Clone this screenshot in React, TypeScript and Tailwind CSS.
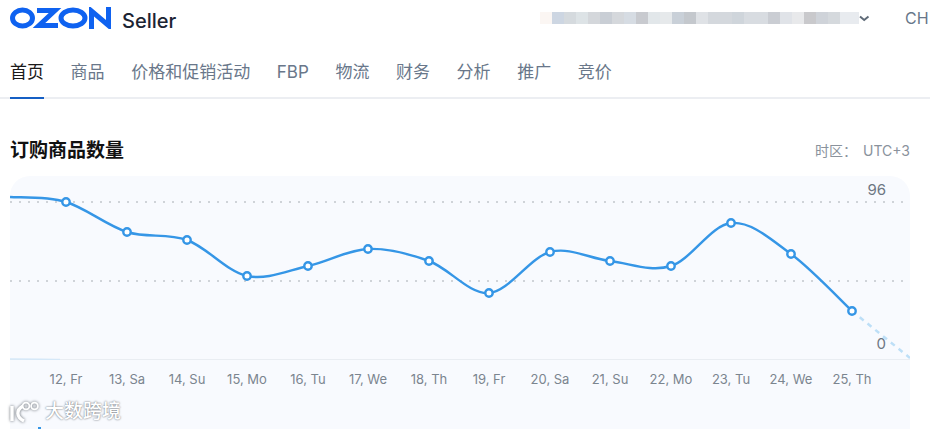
import type { ReactNode } from 'react'

const NAV = ['商品', '价格和促销活动', 'FBP', '物流', '财务', '分析', '推广', '竞价']

// Zone floutée du compte vendeur, bloc par bloc
const PIXELS = [
  'w-3 bg-[#fbf6f3]', 'w-3 bg-[#cdd6e2]', 'w-3 bg-[#d5dade]', 'w-3 bg-[#dde3e6]', 'w-3 bg-[#d4d7db]',
  'w-3 bg-[#c9ced5]', 'w-3 bg-[#d5d8dc]', 'w-3 bg-[#d6dce3]', 'w-3 bg-[#c8cacf]', 'w-3 bg-[#e2e7ea]',
  'w-3 bg-[#e6e9eb]', 'w-3 bg-[#c9d0d8]', 'w-3 bg-[#c4c8cd]', 'w-3 bg-[#dfe2e6]', 'w-3 bg-[#d4d8dd]',
  'w-3 bg-[#d4d8dd]', 'w-3 bg-[#cfd5db]', 'w-3 bg-[#d8dce1]', 'w-3 bg-[#d8dce1]', 'w-3 bg-[#cacdd3]',
  'w-3 bg-[#e0e3e8]', 'w-3 bg-[#e8e9eb]', 'w-3 bg-[#c9c9cc]', 'w-3 bg-[#cfd3d9]', 'w-3 bg-[#d5d9dd]',
  'w-[19px] bg-[#e8ebef]',
]

const POINTS: [number, number][] = [
  [56, 26], [117, 56], [177, 64], [237, 100], [298, 90], [358, 73], [419, 85],
  [479, 117], [540, 76], [600, 85], [661, 90], [721, 47], [781, 78], [842, 135],
]

const DAYS = [
  '12, Fr', '13, Sa', '14, Su', '15, Mo', '16, Tu', '17, We', '18, Th',
  '19, Fr', '20, Sa', '21, Su', '22, Mo', '23, Tu', '24, We', '25, Th',
]

// Courbe lissée : tangentes atténuées entre les points
function smoothPath(pts: [number, number][]) {
  const all: [number, number][] = [[0, 21], ...pts]
  let d = `M${all[0][0]} ${all[0][1]}`
  for (let i = 0; i < all.length - 1; i++) {
    const p0 = all[Math.max(i - 1, 0)]
    const p1 = all[i]
    const p2 = all[i + 1]
    const p3 = all[Math.min(i + 2, all.length - 1)]
    const c1x = p1[0] + (p2[0] - p0[0]) / 6
    const c1y = p1[1] + (p2[1] - p0[1]) / 6
    const c2x = p2[0] - (p3[0] - p1[0]) / 6
    const c2y = p2[1] - (p3[1] - p1[1]) / 6
    d += ` C${c1x} ${c1y} ${c2x} ${c2y} ${p2[0]} ${p2[1]}`
  }
  return d
}

function Logo() {
  return (
    <svg width="102" height="22" viewBox="0 0 102 22" fill="none">
      <ellipse cx="12.5" cy="11" rx="10" ry="8" stroke="#0f62f0" strokeWidth="5" />
      <path d="M27 3.5h18L29 18.5h19" stroke="#0f62f0" strokeWidth="5" />
      <ellipse cx="63" cy="11" rx="12" ry="8" stroke="#0f62f0" strokeWidth="5" />
      <path d="M81.5 22V4l17 14.5V0" stroke="#0f62f0" strokeWidth="5" />
    </svg>
  )
}

function Watermark() {
  return (
    <div className="absolute bottom-[5px] left-2 flex items-center gap-[3px]">
      <svg width="34" height="24" viewBox="0 0 34 24" fill="none" stroke="#fff" strokeWidth="3.4" className="drop-shadow-[0_0_1.5px_#5f656d]">
        <path d="M4 6v15M15 6c-7 4-7 11 1 15" />
        <circle cx="18" cy="6" r="3.4" strokeWidth="1.8" />
        <circle cx="26.5" cy="6" r="3.4" strokeWidth="1.8" />
      </svg>
      <span className="text-[19px] leading-6 font-medium text-white [text-shadow:0_0_2px_#50565e]">大数跨境</span>
    </div>
  )
}

function TabLabel({ children, active }: { children: ReactNode; active?: boolean }) {
  return (
    <a className={active ? 'relative flex h-[47px] items-center pb-[2px] text-[#1a1a1a]' : 'flex h-[47px] items-center pb-[2px] text-[#69778a]'}>
      {children}
      {active && <span className="absolute inset-x-0 -bottom-0.5 h-0.5 bg-[#155fc4]" />}
    </a>
  )
}

export default function App() {
  return (
    <div className="relative h-[429px] w-[930px] overflow-hidden bg-white font-['Inter','Noto_Sans_CJK_SC',sans-serif]">
      <header className="flex h-[50px] items-start justify-between pt-[7px] pl-2.5">
        <div className="flex items-start gap-2.5">
          <Logo />
          <span className="text-[20px] leading-7 font-medium text-[#1b2433]">Seller</span>
        </div>
        <div className="flex items-center pt-px">
          <div className="flex h-3">
            {PIXELS.map((c, i) => (
              <div key={i} className={c} />
            ))}
          </div>
          <svg width="11" height="12" viewBox="0 0 11 12" fill="none" stroke="#5f6b78" strokeWidth="2">
            <path d="M1 4.5l4.2 3.5 4.3-3.5" />
          </svg>
          <span className="ml-[35px] w-[25px] overflow-hidden text-base leading-5 text-[#69778a]">CH</span>
        </div>
      </header>

      <nav className="flex h-[49px] items-start gap-[26.6px] border-b-2 border-[#eceef2] pl-2.5 text-[17px]">
        <TabLabel active>首页</TabLabel>
        {NAV.map((n) => (
          <TabLabel key={n}>{n}</TabLabel>
        ))}
      </nav>

      <section className="pr-5 pl-2.5">
        <div className="flex h-[77px] items-center justify-between pt-[28px] pb-[2px]">
          <h1 className="text-[19px] leading-6 font-bold text-[#111]">订购商品数量</h1>
          <span className="text-sm text-[#8a929c]">
            时区：<span className="ml-1.5">UTC+3</span>
          </span>
        </div>

        <div className="relative h-[300px] rounded-t-[20px] bg-[#f8fafe]">
          <svg width="900" height="184" viewBox="0 0 900 184" fill="none" className="absolute top-0 left-0">
            <path d="M0 26H900M0 105H900" stroke="#cfd3d8" strokeWidth="2" strokeDasharray="2 7" />
            <path d="M0 183.5H900" stroke="#e9edf2" />
            <path d="M0 183C20 183 35 183 50 183.5" stroke="#d5e8f8" strokeWidth="1.5" />
            <path d="M842 135L900 182" stroke="#bddff7" strokeWidth="2.5" strokeDasharray="5 5" />
            <path d={smoothPath(POINTS)} stroke="#3596e6" strokeWidth="2.4" />
            {POINTS.map(([x, y]) => (
              <circle key={x} cx={x} cy={y} r="3.7" fill="#fff" stroke="#3596e6" strokeWidth="2.4" />
            ))}
          </svg>
          <span className="absolute top-[3px] right-6 text-[15px] text-[#6d7783]">96</span>
          <span className="absolute top-[157px] right-6 text-[15px] text-[#6d7783]">0</span>

          <div className="absolute top-[193px] left-0 h-5 w-full">
            {POINTS.map(([x], i) => (
              <span
                key={x}
                className="absolute w-[60px] text-center text-[13px] leading-5 text-[#7b858f]"
                style={{ left: x - 30 }}
              >
                {DAYS[i]}
              </span>
            ))}
          </div>

          <div className="absolute top-[251px] left-7 h-0.5 w-[3px] bg-[#3596e6]" />
        </div>
      </section>

      <Watermark />
    </div>
  )
}
